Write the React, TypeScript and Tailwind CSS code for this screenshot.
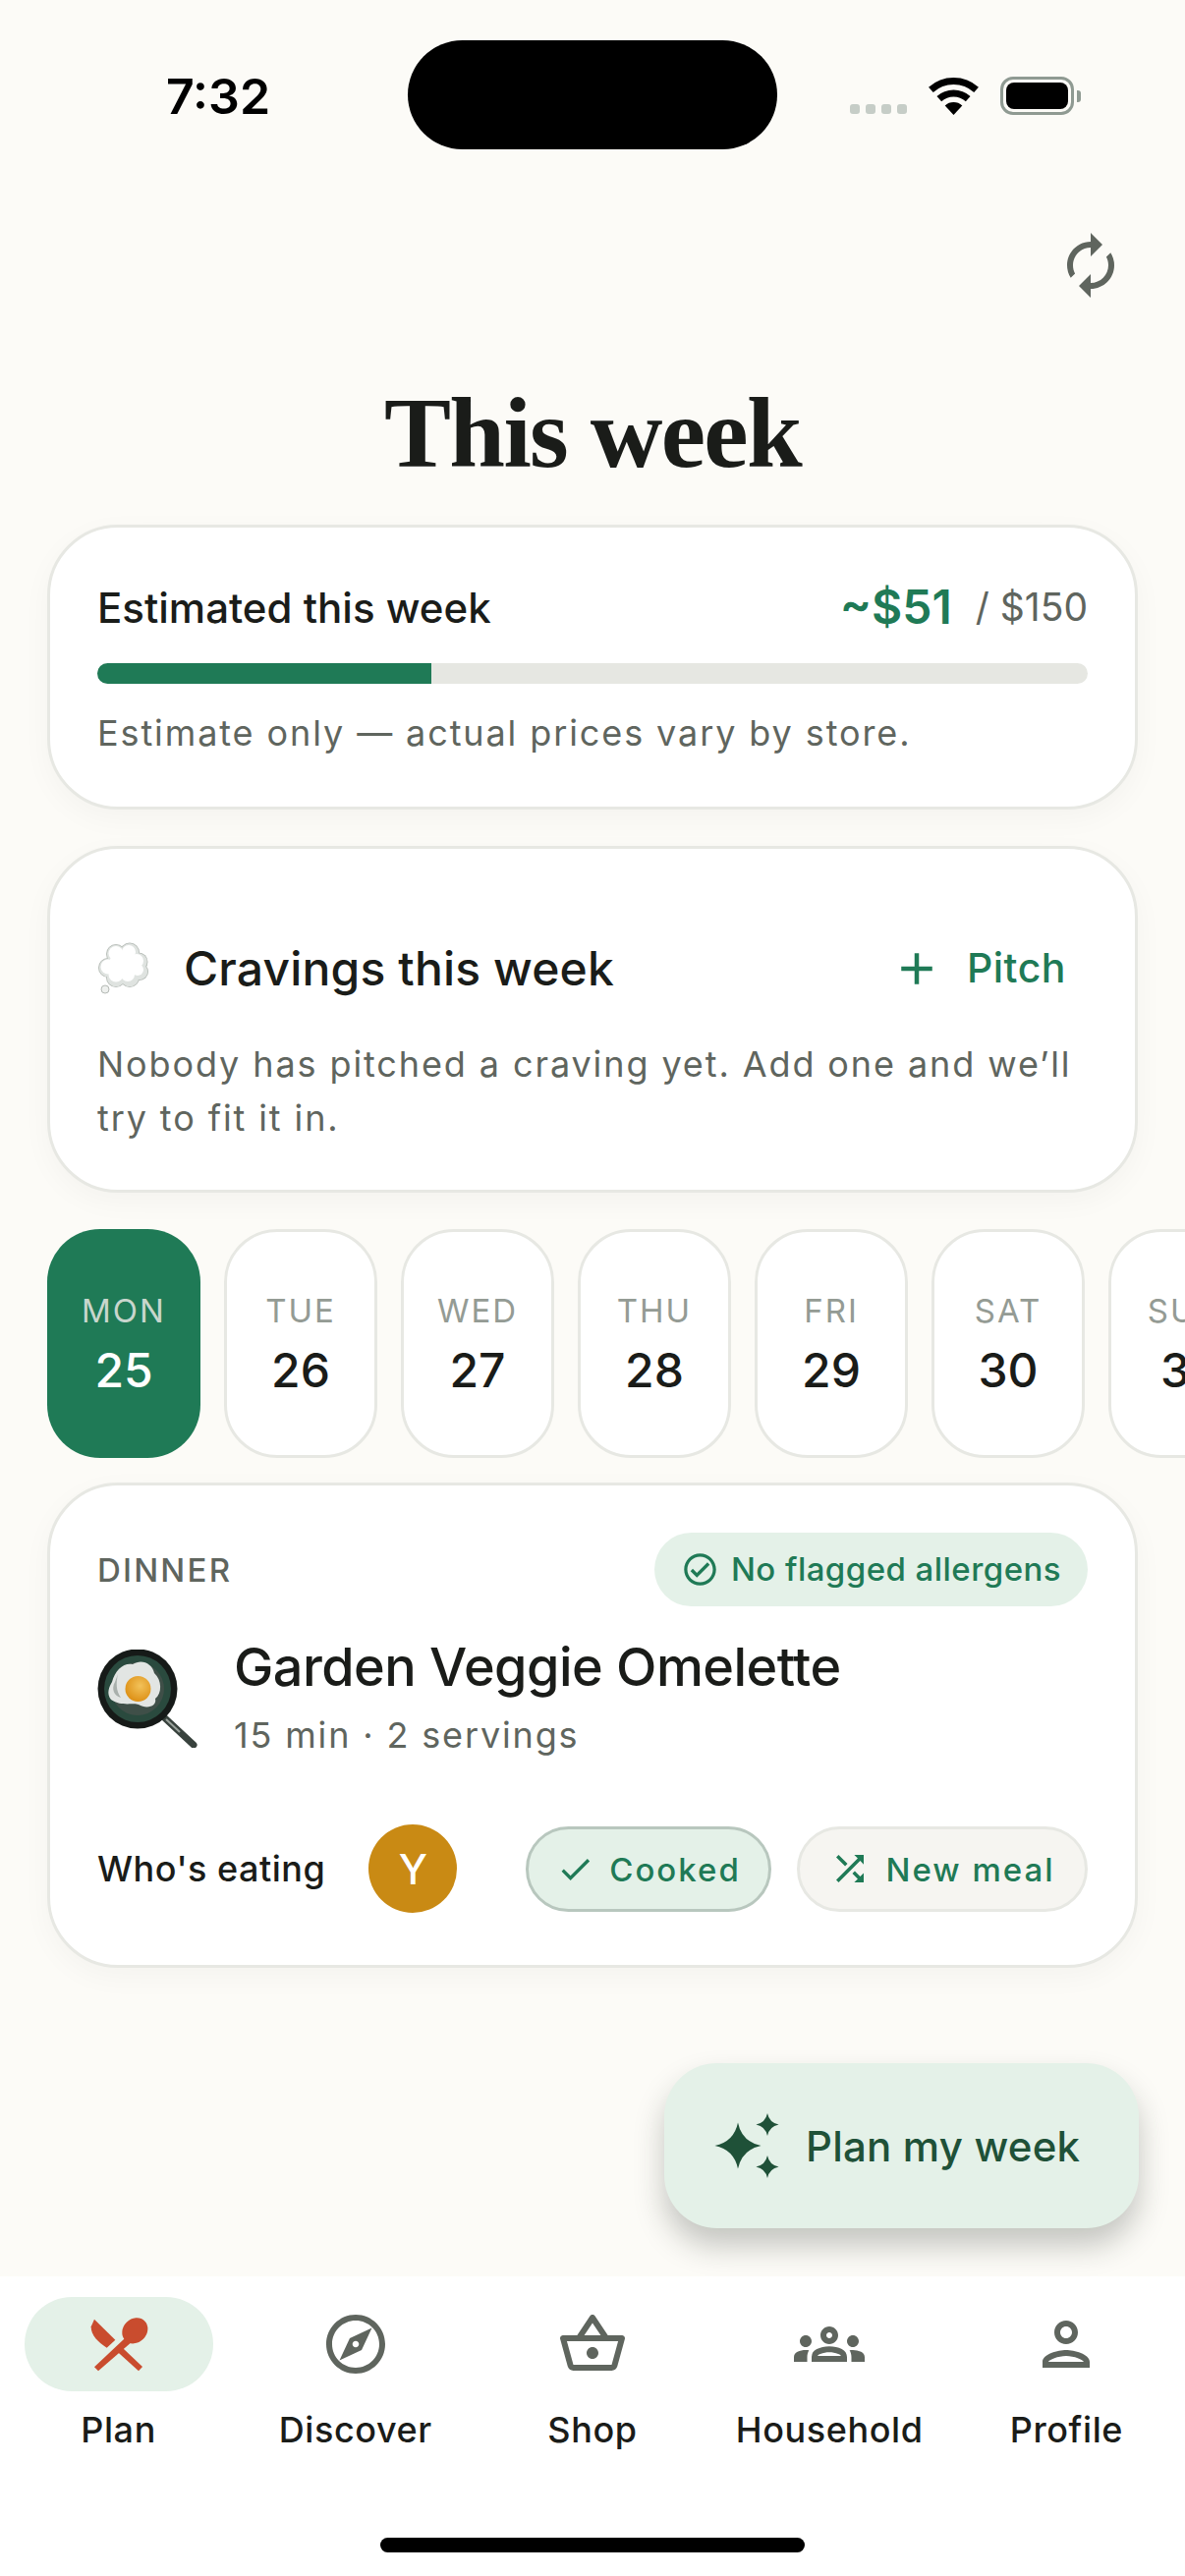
import React from "react";
import { MdSync, MdOutlineExplore, MdOutlineShoppingBasket, MdOutlineGroups, MdOutlinePerson, MdCheck, MdShuffle, MdAdd, MdOutlineCheckCircle } from "react-icons/md";

function Star({ cx, cy, r }: { cx: number; cy: number; r: number }) {
  const k = r * 0.17;
  return (
    <path d={`M${cx} ${cy - r}Q${cx + k} ${cy - k} ${cx + r} ${cy}Q${cx + k} ${cy + k} ${cx} ${cy + r}Q${cx - k} ${cy + k} ${cx - r} ${cy}Q${cx - k} ${cy - k} ${cx} ${cy - r}Z`} />
  );
}

function Sparkles() {
  return (
    <svg viewBox="0 0 66 66" className="w-[66px] h-[66px] fill-[#1f5138] shrink-0">
      <Star cx={24} cy={33} r={23.5} />
      <Star cx={54} cy={11.5} r={11.5} />
      <Star cx={54} cy={54.5} r={11.5} />
    </svg>
  );
}

function Wifi() {
  return (
    <svg viewBox="0 0 51 38" className="w-[51px] h-[38px]">
      <path d="M2.4 12.4A34.5 34.5 0 0 1 48.6 12.4" fill="none" stroke="#000" strokeWidth="7" />
      <path d="M10.8 21.7A22 22 0 0 1 40.2 21.7" fill="none" stroke="#000" strokeWidth="7" />
      <path d="M25.5 38L16.7 28.5A13 13 0 0 1 34.3 28.5Z" fill="#000" />
    </svg>
  );
}

function Cloud() {
  return (
    <svg viewBox="0 0 54 54" className="w-[54px] h-[54px] shrink-0">
      <g fill="#b4bab5">
        <circle cx="19" cy="12" r="10" /><circle cx="33" cy="10.5" r="10" /><circle cx="42" cy="20" r="9.5" />
        <circle cx="43" cy="30" r="9" /><circle cx="33" cy="36" r="10" /><circle cx="19" cy="36" r="10" />
        <circle cx="11" cy="26" r="10" />
      </g>
      <g fill="#dfe3e0">
        <circle cx="19" cy="12" r="9.2" /><circle cx="33" cy="10.5" r="9.2" /><circle cx="42" cy="20" r="8.7" />
        <circle cx="43" cy="30" r="8.2" /><circle cx="33" cy="36" r="9.2" /><circle cx="19" cy="36" r="9.2" />
        <circle cx="11" cy="26" r="9.2" />
      </g>
      <g fill="#ffffff">
        <circle cx="19" cy="11.5" r="7.5" /><circle cx="32" cy="10" r="7" /><circle cx="40" cy="19" r="7" />
        <circle cx="41" cy="28" r="6" /><circle cx="31" cy="33" r="7" /><circle cx="19" cy="33" r="7.5" />
        <circle cx="11" cy="25" r="7.5" /><circle cx="26" cy="23" r="14" />
      </g>
      <circle cx="8" cy="48" r="4" fill="#eef0ee" stroke="#b5bab6" strokeWidth="1" />
    </svg>
  );
}

function Pan() {
  return (
    <svg viewBox="0 0 102 100" className="w-[102px] h-[100px] shrink-0">
      <defs>
        <radialGradient id="yolk" cx="58%" cy="38%" r="65%">
          <stop offset="0" stopColor="#f2c25a" />
          <stop offset="1" stopColor="#dd8f14" />
        </radialGradient>
      </defs>
      <path d="M69 70L98 97" stroke="#38423d" strokeWidth="7" strokeLinecap="round" />
      <path d="M70 71L84 84" stroke="#9aa29c" strokeWidth="2" />
      <circle cx="41" cy="40" r="40.5" fill="#161a18" />
      <circle cx="41" cy="40" r="34" fill="#2a4a3e" />
      <circle cx="41" cy="40" r="27" fill="#3f4f48" />
      <path d="M15 33C18 21 27 13 36 15C45 9 56 14 58 24C66 31 66 45 59 50C61 58 50 61 42 56C34 54 24 58 14 51C9 45 12 38 15 33Z" fill="#e2e5e3" />
      <path d="M21 25C19 34 19 42 24 49C17 47 14 40 18 33Z" fill="#a9b0ac" />
      <circle cx="41.5" cy="40" r="13" fill="url(#yolk)" />
    </svg>
  );
}

function PlanIcon() {
  return (
    <svg viewBox="195 93 216 216" className="w-[72px] h-[72px]">
      <g fill="#c94c2e">
        <path d="M228 125L292 188L266 212C240 195 218 175 218 148Z" />
        <ellipse cx="352" cy="160" rx="42" ry="36" transform="rotate(-45 352 160)" />
        <path d="M322 182L338 198L240 283L228 271Z" />
        <path d="M300 226L314 212L375 270L363 283Z" />
      </g>
    </svg>
  );
}

const days = [
  ["MON", "25"], ["TUE", "26"], ["WED", "27"], ["THU", "28"], ["FRI", "29"], ["SAT", "30"], ["SUN", "31"],
];

const nav = [
  { label: "Plan", icon: <PlanIcon /> },
  { label: "Discover", icon: <MdOutlineExplore size={72} /> },
  { label: "Shop", icon: <MdOutlineShoppingBasket size={72} /> },
  { label: "Household", icon: <MdOutlineGroups size={72} /> },
  { label: "Profile", icon: <MdOutlinePerson size={72} /> },
];

const card = "mx-[48px] bg-white border-[3px] border-[#e7e8e3] rounded-[72px] shadow-[0_9px_30px_rgba(30,35,30,0.035)]";

export default function App() {
  return (
    <div className="relative w-[1206px] h-[2622px] overflow-hidden bg-[#fcfbf7] flex flex-col text-[#1a1c19] font-['Inter',sans-serif]">
      {/* status bar */}
      <div className="h-[152px] shrink-0 flex items-start">
        <div className="w-[415px] pl-[169px] pt-[66px] text-[50px] leading-[64px] font-semibold text-black">7:32</div>
        <div className="w-[376px] h-[111px] mt-[41px] bg-black rounded-[56px]" />
        <div className="flex items-end gap-[22px] pl-[74px] pt-[78px]">
          <div className="flex gap-[6px] mb-[1px]">
            {[0, 1, 2, 3].map((i) => (
              <div key={i} className="w-[10px] h-[10px] rounded-[3px] bg-[#c6cdc7]" />
            ))}
          </div>
          <Wifi />
          <div className="flex items-center gap-[3px]">
            <div className="w-[75px] h-[39px] rounded-[13px] border-[3px] border-[#8f9a92] p-[3px]">
              <div className="w-full h-full rounded-[8px] bg-black" />
            </div>
            <div className="w-[4px] h-[12px] rounded-r-[3px] bg-[#8f9a92]" />
          </div>
        </div>
      </div>

      {/* header */}
      <div className="shrink-0 flex justify-end pt-[82px] pr-[60px]">
        <MdSync size={72} className="text-[#5f655e] -scale-x-100" />
      </div>
      <h1 className="mt-[75px] text-center text-[102px] leading-[120px] font-bold tracking-[-1.7px] font-['Liberation_Serif',serif] text-[#1a1c19]">This week</h1>

      {/* budget */}
      <section className={`${card} mt-[33px] px-[48px] pt-[51px] pb-[48px]`}>
        <div className="flex justify-between items-center h-[60px]">
          <span className="text-[42px] font-medium">Estimated this week</span>
          <span className="flex items-center">
            <span className="text-[48px] font-semibold text-[#1f7a56]">~$51</span>
            <span className="ml-[24px] text-[39px] text-[#5f655e]">/ $150</span>
          </span>
        </div>
        <div className="mt-[27px] h-[21px] rounded-full bg-[#e6e7e2] overflow-hidden">
          <div className="h-full w-[33.7%] bg-[#1f7a56]" />
        </div>
        <p className="mt-[23px] text-[36px] leading-[54px] tracking-[1.9px] text-[#5f655e]">Estimate only — actual prices vary by store.</p>
      </section>

      {/* cravings */}
      <section className={`${card} mt-[37px] px-[48px] pt-[51px] pb-[45px]`}>
        <div className="flex items-center h-[141px]">
          <Cloud />
          <span className="ml-[34px] text-[48px] font-medium tracking-[0.15px]">Cravings this week</span>
          <span className="ml-auto mr-[22px] flex items-center gap-[24px] text-[#1f7a56]">
            <MdAdd size={54} />
            <span className="text-[41px] font-medium tracking-[0.5px]">Pitch</span>
          </span>
        </div>
        <p className="text-[36px] leading-[55px] tracking-[1.9px] text-[#5f655e]">Nobody has pitched a craving yet. Add one and we’ll try to fit it in.</p>
      </section>

      {/* days */}
      <div className="mt-[37px] pl-[48px] flex gap-[24px] shrink-0">
        {days.map(([d, n], i) => (
          <div
            key={d}
            className={`w-[156px] h-[233px] shrink-0 rounded-[54px] flex flex-col items-center justify-center ${
              i === 0 ? "bg-[#1f7a56]" : "bg-white border-[3px] border-[#e7e8e3]"
            }`}
          >
            <span className={`text-[33px] leading-[52px] tracking-[2px] ${i === 0 ? "text-[#c8d6cd]" : "text-[#949b94]"}`}>{d}</span>
            <span className={`mt-[2px] text-[48px] leading-[66px] font-medium ${i === 0 ? "text-white" : ""}`}>{n}</span>
          </div>
        ))}
      </div>

      {/* meal */}
      <section className={`${card} mt-[25px] px-[48px] pt-[48px] pb-[53px]`}>
        <div className="flex justify-between items-center">
          <span className="pt-[3px] text-[33px] tracking-[2.2px] text-[#5f655e] font-medium">DINNER</span>
          <span className="h-[75px] px-[27px] rounded-full bg-[#e4f1e8] flex items-center gap-[12px] text-[#1f7a56]">
            <MdOutlineCheckCircle size={39} />
            <span className="text-[33px] font-medium tracking-[0.45px]">No flagged allergens</span>
          </span>
        </div>
        <div className="mt-[29px] flex items-center gap-[37px]">
          <Pan />
          <div>
            <div className="text-[54px] leading-[66px] font-medium tracking-[-0.54px]">Garden Veggie Omelette</div>
            <div className="mt-[9px] text-[36px] leading-[54px] tracking-[1.85px] text-[#5f655e]">15 min · 2 servings</div>
          </div>
        </div>
        <div className="mt-[64px] flex items-center">
          <span className="text-[36px] font-medium tracking-[0.5px]">Who's eating</span>
          <span className="ml-[44px] w-[90px] h-[90px] rounded-full bg-[#c98a14] text-white text-[42px] font-medium flex items-center justify-center">Y</span>
          <span className="ml-auto h-[87px] w-[250px] rounded-full bg-[#e4f1e8] border-[3px] border-[#b8c7be] flex items-center justify-center gap-[15px] text-[#1f7a56]">
            <MdCheck size={39} />
            <span className="pt-[3px] text-[33px] font-medium tracking-[2px]">Cooked</span>
          </span>
          <span className="ml-[26px] h-[87px] w-[296px] rounded-full bg-[#f6f5f1] border-[3px] border-[#e7e8e3] flex items-center justify-center gap-[15px] text-[#1f7a56]">
            <MdShuffle size={42} />
            <span className="pt-[3px] text-[33px] font-medium tracking-[2px]">New meal</span>
          </span>
        </div>
      </section>

      <div className="flex-1" />

      {/* FAB */}
      <div className="absolute left-[676px] top-[2100px] w-[483px] h-[168px] rounded-[54px] bg-[#e4f1e8] shadow-[0_18px_30px_rgba(30,40,30,0.25)] flex items-center pl-[51px] gap-[27px] text-[#1f5138]">
        <Sparkles />
        <span className="text-[42px] font-medium tracking-[0.2px]">Plan my week</span>
      </div>

      {/* nav */}
      <nav className="h-[305px] shrink-0 bg-white relative">
        <div className="grid grid-cols-5 pt-[21px]">
          {nav.map((n, i) => (
            <div key={n.label} className="flex flex-col items-center">
              <div className={`w-[192px] h-[96px] rounded-full flex items-center justify-center text-[#5f655e] ${i === 0 ? "bg-[#e4f1e8]" : ""}`}>
                {n.icon}
              </div>
              <span className="mt-[12px] text-[36px] leading-[54px] font-medium tracking-[0.6px] whitespace-nowrap">{n.label}</span>
            </div>
          ))}
        </div>
        <div className="absolute left-[387px] bottom-[24px] w-[432px] h-[15px] rounded-full bg-black" />
      </nav>
    </div>
  );
}
